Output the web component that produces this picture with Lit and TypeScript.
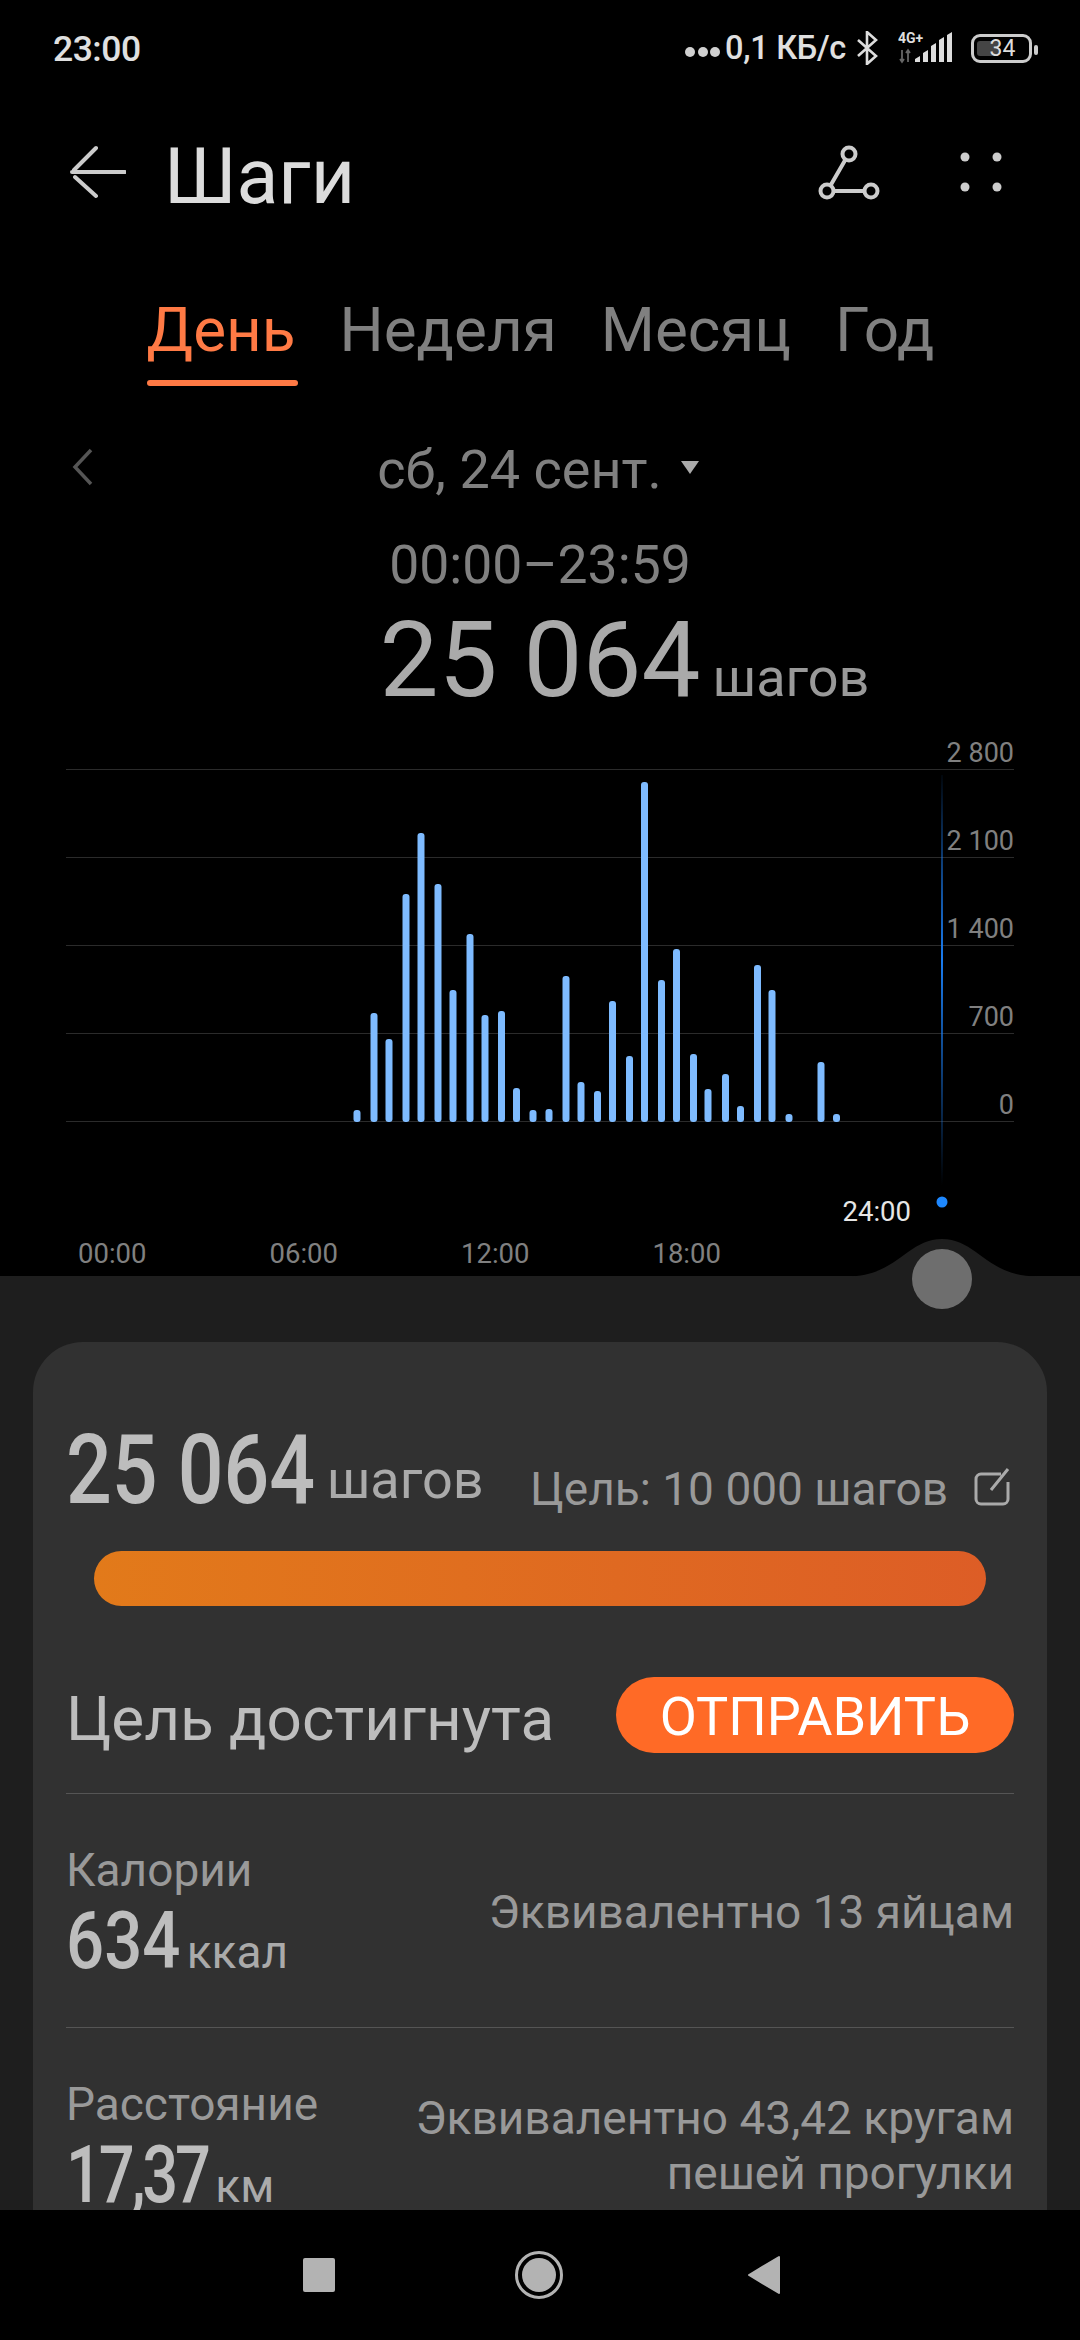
import { LitElement, html, css, svg } from 'lit';
import { customElement } from 'lit/decorators.js';

// [centre x on the page, bar height in px]
const BARS: [number, number][] = [
  [357, 12], [374, 109], [389, 83], [406, 228], [421, 289], [438, 238], [453, 132], [470, 188],
  [485, 107], [501.5, 111], [516.5, 34], [533, 12], [549, 13], [566, 146], [581, 40], [597.5, 31],
  [612.5, 121], [629.5, 66], [644.5, 340], [661.5, 142], [676.5, 173], [693.5, 68], [708, 33],
  [725.5, 48], [740.5, 16], [757.5, 157], [772, 132], [789, 8], [821, 60], [836.5, 8],
];

const AXIS = ['2 800', '2 100', '1 400', '700', '0'];
const HOURS = ['00:00', '06:00', '12:00', '18:00'];

@customElement('app-root')
export class AppRoot extends LitElement {
  static styles = css`
    :host {
      display: flex;
      flex-direction: column;
      width: 1080px;
      height: 2340px;
      overflow: hidden;
      background: #000;
      font-family: Roboto, sans-serif;
      color: #aaa;
    }
    .status {
      height: 96px;
      flex: none;
      display: flex;
      align-items: center;
      padding: 0 48px 0 53px;
      font-size: 32.5px;
      font-weight: 500;
      color: #e0e0e0;
    }
    .status .time { flex: 1; font-size: 35.5px; letter-spacing: -0.5px; margin-top: 2px; }
    .status .speed { display: flex; align-items: center; letter-spacing: -0.3px; }
    .dots { display: flex; gap: 2.5px; margin: 8px 5px 0 0; }
    .dots i { width: 10px; height: 10px; border-radius: 50%; background: #d0d0d0; }
    .bt { margin-left: 10px; }
    .net { margin: 0 0 4px 20px; }
    .battery {
      position: relative;
      box-sizing: border-box;
      width: 61px;
      height: 29px;
      margin-left: 15px;
      border: 3px solid #ccc;
      border-radius: 9px;
      display: flex;
      align-items: center;
      justify-content: center;
      font-size: 23px;
      font-weight: 400;
      color: #ddd;
    }
    .battery .level {
      position: absolute;
      left: 3px;
      top: 4px;
      bottom: 4px;
      border-radius: 3px;
      background: #454545;
    }
    .battery span { position: relative; margin-left: 2px; }
    .battery::after {
      content: '';
      position: absolute;
      right: -9px;
      top: 8px;
      width: 4px;
      height: 10px;
      border-radius: 2px;
      background: #ccc;
    }
    .header {
      height: 152px;
      flex: none;
      display: flex;
      align-items: center;
      padding: 0 74px 0 66px;
    }
    .header .back { margin-right: 38px; flex: none; }
    .header h1 {
      flex: 1;
      margin: 10px 0 0;
      font-size: 77px;
      font-weight: 400;
      color: #dcdcdc;
    }
    .header .more { margin-left: 74px; }
    .tabs {
      height: 156px;
      box-sizing: border-box;
      flex: none;
      display: flex;
      justify-content: center;
      gap: 44px;
      font-size: 62px;
      line-height: 68px;
      color: #808080;
      padding: 48px 0 0 1px;
    }
    .tabs .on { color: #ff7a45; position: relative; }
    .tabs .on::after {
      content: '';
      position: absolute;
      left: 0;
      right: -2px;
      top: 84px;
      height: 6px;
      border-radius: 3px;
      background: #ff7a45;
    }
    .date {
      margin-top: 36px;
      height: 60px;
      flex: none;
      display: flex;
      align-items: center;
      justify-content: center;
      padding-right: 3px;
      position: relative;
      font-size: 54px;
      line-height: 60px;
      color: #808080;
    }
    .date .prev { position: absolute; left: 71px; top: 8px; }
    .date .caret { margin-left: 18px; margin-bottom: 6px; }
    .range {
      text-align: center;
      font-size: 53.5px;
      line-height: 60px;
      margin-top: 35px;
      color: #808080;
    }
    .total {
      display: grid;
      grid-template-columns: 1fr auto 1fr;
      align-items: baseline;
      line-height: 120px;
      height: 120px;
      margin-top: 6px;
    }
    .total b { grid-column: 2; font-size: 105px; font-weight: 400; color: #aaa; }
    .total span { font-size: 54px; margin-left: 12px; color: #999; }
    .chart { position: relative; margin: 19px 66px 0; height: 382px; flex: none; }
    .rows { display: flex; flex-direction: column; }
    .row {
      height: 88px;
      box-sizing: border-box;
      border-bottom: 1px solid #2b2b2b;
      display: flex;
      align-items: flex-end;
      justify-content: flex-end;
      font-size: 27px;
      line-height: 32px;
      color: #808080;
    }
    .row:first-child { height: 30px; }
    .plot { position: absolute; left: -66px; top: 0; }
    .now {
      display: flex;
      justify-content: flex-end;
      height: 44px;
      margin-top: 70px;
      padding-right: 169px;
      font-size: 27.5px;
      line-height: 40px;
      color: #e6e6e6;
    }
    .hours {
      display: flex;
      gap: 123px;
      padding-left: 78px;
      height: 40px;
      font-size: 27.5px;
      line-height: 36px;
      color: #808080;
    }
    .sheet {
      position: relative;
      flex: 1;
      min-height: 0;
      background: #1e1e1e;
      display: flex;
      flex-direction: column;
    }
    .bump { position: absolute; left: 847px; top: -37px; }
    .knob {
      position: absolute;
      left: 912px;
      top: -27px;
      width: 60px;
      height: 60px;
      border-radius: 50%;
      background: #6e6e6e;
    }
    .clip { flex: 1; min-height: 0; overflow: hidden; padding: 66px 33px 0; }
    .card {
      background: #313131;
      border-radius: 50px 50px 0 0;
      padding: 78px 33px 0;
      height: 1000px;
    }
    .goal { display: flex; align-items: baseline; height: 100px; }
    /* the numbers in the card use a narrow face, so squeeze Roboto to that width */
    .num {
      display: inline-block;
      font-weight: 500;
      color: #bdbdbd;
      transform-origin: left;
    }
    .num-steps { font-size: 96px; line-height: 100px; transform: scaleX(0.84); margin-right: -47px; }
    .num-kcal { font-size: 79px; transform: scaleX(0.85); margin-right: -20px; }
    .num-km { font-size: 79px; letter-spacing: -4px; transform: scaleX(0.8); margin-right: -34px; }
    .goal .unit { font-size: 54px; margin-left: 11px; color: #aaa; flex: 1; position: relative; top: -5px; }
    .goal .target { font-size: 46px; color: #999; position: relative; top: 2px; }
    .goal svg { margin: 48px 4px 0 26px; align-self: flex-start; }
    .bar {
      height: 55px;
      margin: 31px 28px 0;
      border-radius: 28px;
      background: linear-gradient(90deg, #e27a1a, #dd5d26);
    }
    .done { display: flex; align-items: center; justify-content: space-between; height: 76px; margin-top: 71px; }
    .done span { font-size: 62px; color: #bdbdbd; margin-top: 6px; }
    .done button {
      width: 398px;
      height: 76px;
      border: none;
      border-radius: 38px;
      padding: 2px 0 0;
      background: #ff6a26;
      color: #fff;
      font: 400 54px Roboto, sans-serif;
    }
    .stat {
      display: flex;
      justify-content: space-between;
      align-items: center;
      border-top: 1px solid #555;
      height: 234px;
      box-sizing: border-box;
    }
    .done + .stat { margin-top: 40px; }
    .stat .left { margin-top: 8px; }
    .stat .label { font-size: 46px; line-height: 56px; color: #999; }
    .stat .value { display: flex; align-items: baseline; line-height: 72px; margin-top: 7px; }
    .stat .value span { font-size: 46px; margin-left: 6px; color: #aaa; }
    .stat .note { font-size: 46px; line-height: 55px; text-align: right; color: #999; margin-top: 3px; }
    .nav {
      height: 130px;
      flex: none;
      display: flex;
      align-items: center;
      justify-content: center;
      background: #000;
    }
  `;

  render() {
    return html`
      <div class="status">
        <span class="time">23:00</span>
        <span class="dots"><i></i><i></i><i></i></span>
        <span class="speed">0,1 КБ/с</span>
        <svg class="bt" width="22" height="34" viewBox="0 0 22 34" fill="none" stroke="#ddd" stroke-width="2.6">
          <path d="M2 9l18 16-9 8V1l9 8L2 25" />
        </svg>
        <svg class="net" width="58" height="36" viewBox="0 -4 58 36">
          <text x="0" y="11" font-family="Roboto, sans-serif" font-size="14" font-weight="700" fill="#ddd">4G+</text>
          <path d="M4 18v12M2 27l2 3 2-3M10 30V18M8 21l2-3 2 3" stroke="#666" stroke-width="1.8" fill="none" />
          <path d="M17 30v-3l5-3v6zM25 30v-9l5-3v12zM33 30V14l5-3v19zM41 30V8l5-3v25zM49 30V3l5-3v30z" fill="#ddd" />
        </svg>
        <div class="battery">
          <div class="level" style="width: 22px"></div>
          <span>34</span>
        </div>
      </div>

      <div class="header">
        <svg class="back" width="60" height="54" viewBox="0 0 60 54" fill="none" stroke="#ccc" stroke-width="4" stroke-linecap="round">
          <path d="M6 27h53M30 3L8 25M9 32l21 19" />
        </svg>
        <h1>Шаги</h1>
        <svg width="66" height="60" viewBox="0 0 66 60" fill="none" stroke="#ccc" stroke-width="4">
          <circle cx="33" cy="12" r="6.500" />
          <circle cx="11" cy="49" r="6.500" />
          <circle cx="55" cy="49" r="6.500" />
          <path d="M29.500 17.500L14.500 43.500M17.500 49h31" />
        </svg>
        <svg class="more" width="50" height="50" viewBox="0 0 50 50" fill="#ccc">
          <circle cx="9" cy="10" r="4.500" />
          <circle cx="41" cy="10" r="4.500" />
          <circle cx="9" cy="40" r="4.500" />
          <circle cx="41" cy="40" r="4.500" />
        </svg>
      </div>

      <div class="tabs">
        <span class="on">День</span>
        <span>Неделя</span>
        <span>Месяц</span>
        <span>Год</span>
      </div>

      <div class="date">
        <svg class="prev" width="24" height="38" viewBox="0 0 24 38" fill="none" stroke="#555" stroke-width="3.500">
          <path d="M20 2L4 19l16 17" />
        </svg>
        <span>сб, 24 сент.</span>
        <svg class="caret" width="20" height="14" viewBox="0 0 20 14" fill="#aaa">
          <path d="M1 1h18l-9 13z" />
        </svg>
      </div>
      <div class="range">00:00–23:59</div>
      <div class="total"><b>25 064</b><span>шагов</span></div>

      <div class="chart">
        <div class="rows">
          ${AXIS.map((label) => html`<div class="row"><span>${label}</span></div>`)}
        </div>
        <svg class="plot" width="1080" height="470" viewBox="0 740 1080 470">
          <defs>
            <linearGradient id="now" x1="0" y1="0" x2="0" y2="1">
              <stop offset="0" stop-color="#1a7cf0" stop-opacity="0.05" />
              <stop offset="0.45" stop-color="#1a7cf0" />
              <stop offset="1" stop-color="#1a7cf0" stop-opacity="0" />
            </linearGradient>
          </defs>
          <rect x="941" y="775" width="2" height="410" fill="url(#now)" />
          <circle cx="942" cy="1202" r="5.500" fill="#1e88ff" />
          ${BARS.map(
            ([x, h]) => svg`<rect x=${x - 3.5} y=${1122 - h} width="7" height=${h} rx="3" fill="#7ebbff" />`,
          )}
        </svg>
      </div>
      <div class="now">24:00</div>
      <div class="hours">${HOURS.map((h) => html`<span>${h}</span>`)}</div>

      <div class="sheet">
        <svg class="bump" width="190" height="38" viewBox="0 0 190 38" fill="#1e1e1e">
          <path d="M0 37.500C50 37.500 60 0 95 0S140 37.500 190 37.500V38H0z" />
        </svg>
        <div class="knob"></div>
        <div class="clip">
          <div class="card">
            <div class="goal">
              <b class="num num-steps">25 064</b>
              <span class="unit">шагов</span>
              <span class="target">Цель: 10 000 шагов</span>
              <svg width="36" height="38" viewBox="0 0 36 38" fill="none" stroke="#aaa" stroke-width="3">
                <path d="M27 6H7a5 5 0 0 0-5 5v20a5 5 0 0 0 5 5h22a5 5 0 0 0 5-5V14M17 22L34 1" />
              </svg>
            </div>
            <div class="bar"></div>
            <div class="done">
              <span>Цель достигнута</span>
              <button>ОТПРАВИТЬ</button>
            </div>
            <div class="stat">
              <div class="left">
                <div class="label">Калории</div>
                <div class="value"><b class="num num-kcal">634</b><span>ккал</span></div>
              </div>
              <div class="note">Эквивалентно 13 яйцам</div>
            </div>
            <div class="stat">
              <div class="left">
                <div class="label">Расстояние</div>
                <div class="value"><b class="num num-km">17,37</b><span>км</span></div>
              </div>
              <div class="note">Эквивалентно 43,42 кругам<br />пешей прогулки</div>
            </div>
          </div>
        </div>
      </div>

      <div class="nav">
        <svg width="500" height="60" viewBox="0 0 500 60" fill="#b3b3b3">
          <rect x="13" y="13" width="32" height="34" rx="2" />
          <circle cx="249" cy="30" r="17" />
          <circle cx="249" cy="30" r="22.500" fill="none" stroke="#b3b3b3" stroke-width="3" />
          <path d="M489 12v36L459 30z" stroke="#b3b3b3" stroke-width="2" stroke-linejoin="round" />
        </svg>
      </div>
    `;
  }
}
